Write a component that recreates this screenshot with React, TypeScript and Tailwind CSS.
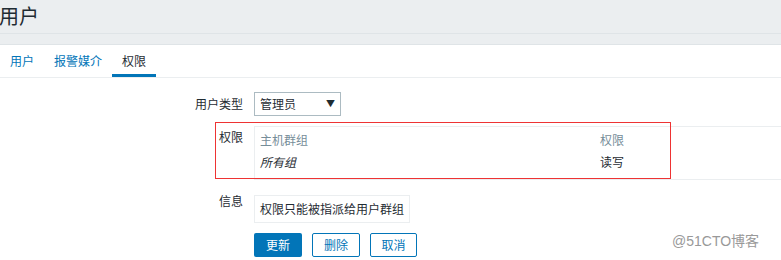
import React from 'react';

const font = { fontFamily: '"Noto Sans CJK SC", "Liberation Sans", sans-serif' };

export default function App() {
  return (
    <div className="relative w-[781px] h-[260px] overflow-hidden bg-white text-[12px] text-[#1f2c33]" style={font}>
      {/* Page header */}
      <div className="h-[34px] bg-[#ebeef0] border-b border-[#dfe4e7] flex items-center">
        <h1 className="text-[20px] leading-none -ml-[1px] -mt-[2px] font-normal">用户</h1>
      </div>
      <div className="h-[11px] bg-[#ebeef0] border-b border-[#dfe4e7]" />

      {/* Tabs */}
      <div className="flex h-[33px] border-b border-[#ebeef0] pl-[10px] gap-[20px]">
        <div className="text-[#0275b8] pt-[7px]">用户</div>
        <div className="text-[#0275b8] pt-[7px]">报警媒介</div>
        <div className="px-[10px] pt-[7px] border-b-[3px] border-[#0275b8] -ml-[10px]">权限</div>
      </div>

      {/* Form */}
      <div className="pt-[14px]">
        <div className="flex items-center h-[24px]">
          <div className="w-[243px] shrink-0 text-right">用户类型</div>
          <div className="ml-[11px] w-[87px] h-[24px] border border-[#acbbc2] flex items-center justify-between px-[5px]">
            <span>管理员</span>
            <span className="text-[9px]">▼</span>
          </div>
        </div>

        <div className="flex mt-[10px]">
          <div className="w-[243px] shrink-0 text-right pt-[2px]">权限</div>
          <div className="ml-[11px] w-[600px] shrink-0 h-[54px] border border-[#ebeef0] px-[5px] pt-[2px]">
            <div className="flex text-[#768d99] h-[22px] items-center">
              <div className="w-[340px]">主机群组</div>
              <div>权限</div>
            </div>
            <div className="flex h-[21px] items-center">
              <div className="w-[340px] italic">所有组</div>
              <div>读写</div>
            </div>
          </div>
        </div>

        <div className="flex mt-[15px]">
          <div className="w-[243px] shrink-0 text-right -mt-[3px]">信息</div>
          <div className="ml-[11px] h-[28px] px-[5px] border border-[#ebeef0] flex items-center">
            权限只能被指派给用户群组
          </div>
        </div>

        <div className="flex gap-[10px] ml-[254px] mt-[10px]">
          <button className="w-[48px] h-[24px] rounded-[2px] bg-[#0275b8] text-white">更新</button>
          <button className="w-[48px] h-[24px] rounded-[2px] border border-[#0275b8] text-[#0275b8] bg-white">删除</button>
          <button className="w-[47px] h-[24px] rounded-[2px] border border-[#0275b8] text-[#0275b8] bg-white">取消</button>
        </div>
      </div>

      {/* Annotation box */}
      <div className="absolute left-[215px] top-[122px] w-[456px] h-[57px] border border-[#ee3333]" />

      {/* Watermark */}
      <div className="absolute left-[672px] top-[231px] text-[14px] text-[#999]" style={{ fontFamily: '"Liberation Sans", "Noto Sans CJK SC", sans-serif' }}>
        @51CTO博客
      </div>
    </div>
  );
}
